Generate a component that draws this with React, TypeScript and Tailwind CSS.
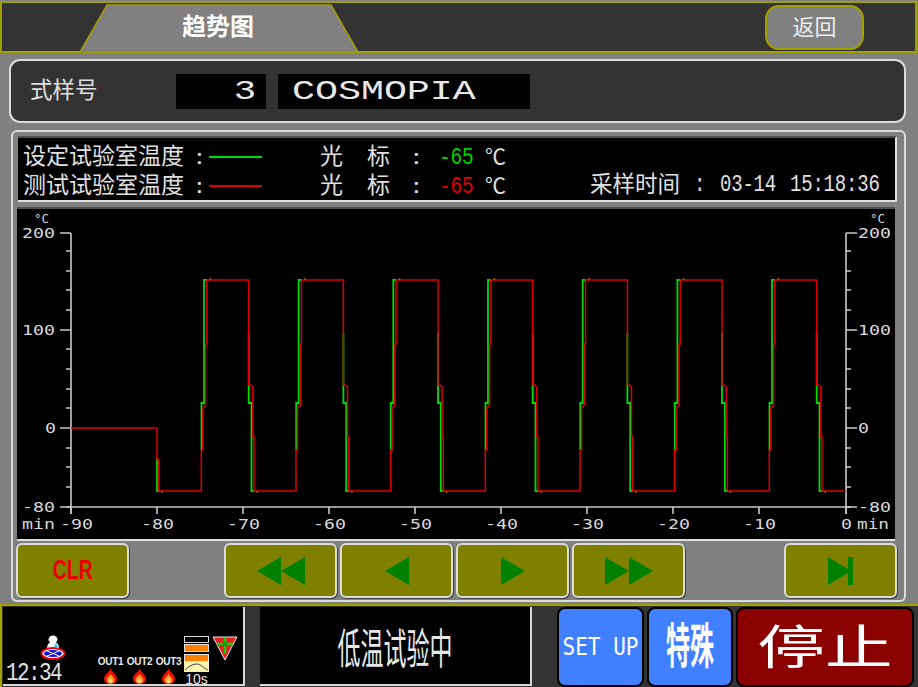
const cycleDx = Array.from({ length: 7 }, (_, k) => k * 94.67);

function pts(list: number[][], dx = 0) {
  return list.map(([x, y]) => `${(x + dx).toFixed(1)},${y}`).join(" ");
}

const greenA = [[201.5, 450], [201.5, 403], [204, 403], [204, 280], [207, 280]];
const greenB = [[248.7, 333], [248.7, 403], [251.5, 403], [251.5, 491], [254.6, 491]];
const redCycle = [
  [201.3, 491], [201.3, 450], [202.8, 450], [202.8, 408], [204, 407], [205.6, 405], [205.6, 344], [206.8, 344], [206.8, 280],
  [248.7, 280], [248.7, 385], [250.5, 385], [252.8, 387], [252.8, 437], [254, 437], [254, 491],
];

function Chart() {
  const minorY = [251, 271, 290, 310, 349, 369, 389, 408, 448, 467, 487];
  const majorY = [233, 330, 428, 507];
  const xTicks = [71, 157, 243, 329, 415, 501, 587, 673, 759, 846];
  const yLabels: [string, number][] = [["200", 233], ["100", 330], ["-80", 507]];
  const xLabels: [string, number][] = [["-90", 76], ["-80", 157], ["-70", 243], ["-60", 329], ["-50", 415], ["-40", 501], ["-30", 587], ["-20", 673], ["-10", 759]];
  const label = "font-['DejaVu_Sans_Mono',monospace]";
  const red: number[][] = [[71, 428], [157, 428], [157, 459], [158.5, 459], [158.5, 491]];
  cycleDx.forEach((dx) => redCycle.forEach(([x, y]) => red.push([x + dx, y])));
  red.push([846, 491]);
  return (
    <svg viewBox="17 209 878 330" className="block w-full h-full" fill="none">
      <g stroke="#c8c8c8" strokeWidth="1.6">
        <path d="M71 233V514M846 233V514M66 507H851" />
        {majorY.map((y) => (
          <path key={y} d={`M60 ${y}H71M846 ${y}H857`} />
        ))}
        {minorY.map((y) => (
          <path key={y} d={`M66 ${y}H71M846 ${y}H851`} />
        ))}
        {xTicks.map((x) => (
          <path key={x} d={`M${x} 507V514`} />
        ))}
      </g>
      <g fill="#d8d8d8" fontSize="14" className={label}>
        {yLabels.map(([t, y]) => (
          <g key={t}>
            <text x="22" y={y + 5} textLength="33" lengthAdjust="spacingAndGlyphs">{t}</text>
            <text x="858" y={y + 5} textLength="33" lengthAdjust="spacingAndGlyphs">{t}</text>
          </g>
        ))}
        <text x="45" y="433" textLength="11" lengthAdjust="spacingAndGlyphs">0</text>
        <text x="858" y="433" textLength="11" lengthAdjust="spacingAndGlyphs">0</text>
        {xLabels.map(([t, x]) => (
          <text key={t} x={x - 16} y="529" textLength="33" lengthAdjust="spacingAndGlyphs">{t}</text>
        ))}
        <text x="841" y="529" textLength="11" lengthAdjust="spacingAndGlyphs">0</text>
        <text x="22" y="529" textLength="33" lengthAdjust="spacingAndGlyphs">min</text>
        <text x="857" y="529" textLength="32" lengthAdjust="spacingAndGlyphs">min</text>
        <text x="34" y="223" fontSize="13" textLength="15" lengthAdjust="spacingAndGlyphs">°C</text>
        <text x="870" y="223" fontSize="13" textLength="15" lengthAdjust="spacingAndGlyphs">°C</text>
      </g>
      <g stroke="#00dc00" strokeWidth="1.8">
        <polyline points={pts([[157, 459], [157, 491], [160, 491]])} />
        {cycleDx.map((dx) => (
          <g key={dx}>
            <polyline points={pts(greenA, dx)} />
            <polyline points={pts(greenB, dx)} />
          </g>
        ))}
      </g>
      <polyline points={pts(red)} stroke="#dc0000" strokeWidth="1.5" />
      <g fill="#a06000">
        {cycleDx.map((dx) => (
          <g key={dx}>
            <rect x={209.5 + dx} y="278" width="1.5" height="2" />
            <rect x={256.5 + dx} y="491" width="1.5" height="2" />
          </g>
        ))}
        <rect x="161" y="491" width="1.5" height="2" />
      </g>
    </svg>
  );
}

function NavButton({ className, children }: { className: string; children: React.ReactNode }) {
  return (
    <div className={`h-[55px] flex items-center justify-center bg-[#808000] border-2 border-[#dcdcdc] rounded-[6px] shadow-[1px_1px_0_#404040] ${className}`}>
      {children}
    </div>
  );
}

function Arrow({ polys, w }: { polys: string[]; w: number }) {
  return (
    <svg width={w} height="28" viewBox={`0 0 ${w} 28`}>
      {polys.map((p) => (
        <polygon key={p} points={p} fill="#008000" />
      ))}
    </svg>
  );
}

function Flame() {
  return (
    <svg width="15" height="16" viewBox="0 0 15 16">
      <path d="M7.5 0C8 4 14 6 14 11C14 14 11 16 7.5 16C4 16 1 14 1 11C1 6 7 4 7.5 0Z" fill="#f01000" />
      <path d="M7.5 5.5C8 8 11.5 9.5 11.5 12C11.5 14 9.5 15.5 7.5 15.5C5.5 15.5 3.5 14 3.5 12C3.5 9.5 7 8 7.5 5.5Z" fill="#ff9a30" />
      <path d="M7.5 10C8 11 9.5 12 9.5 13.2C9.5 14.3 8.6 15 7.5 15C6.4 15 5.5 14.3 5.5 13.2C5.5 12 7 11 7.5 10Z" fill="#ffd870" />
    </svg>
  );
}

function Out({ t }: { t: string }) {
  return (
    <div className="w-[29px] flex flex-col items-center">
      <span className="text-[10px] leading-[11px] font-bold text-[#e8e8e8] font-['Liberation_Sans',sans-serif] tracking-[-0.3px]">{t}</span>
      <div className="mt-[1px]"><Flame /></div>
    </div>
  );
}

const mono = "font-['Liberation_Mono','Noto_Sans_CJK_SC',monospace]";
const sans = "font-['Liberation_Sans','Noto_Sans_CJK_SC',sans-serif]";

function LegendRow({ label, lineColor, value, valueColor, right }: { label: string; lineColor: string; value: string; valueColor: string; right?: React.ReactNode }) {
  return (
    <div className="h-[29px] flex items-center text-[#e0e0e0] text-[23px] leading-none whitespace-nowrap">
      <span className="w-[173px] shrink-0">{label}</span>
      <span className="w-[13px] shrink-0 text-[20px] font-bold">:</span>
      <span className="w-[53px] h-[2px] shrink-0" style={{ background: lineColor }} />
      <span className="w-[58px] shrink-0" />
      <span className="w-[47px] shrink-0">光</span>
      <span className="w-[46px] shrink-0">标</span>
      <span className="w-[26px] shrink-0 text-[20px] font-bold">:</span>
      <span className="w-[46px] shrink-0">
        <span className={`inline-block scale-y-[1.25] text-[19.5px] tracking-[-0.2px] ${mono}`} style={{ color: valueColor }}>{value}</span>
      </span>
      <span className="w-[105px] shrink-0 text-[21px]">℃</span>
      {right}
    </div>
  );
}

export default function App() {
  return (
    <div className={`w-[918px] h-[687px] bg-[#808080] overflow-hidden flex flex-col ${sans}`}>
      {/* header */}
      <header className="mt-[1px] mr-[1px] h-[52px] shrink-0 bg-[#333333] border-2 border-[#a0a000] flex">
        <div className="relative ml-[78px] w-[278px] h-[50px] -mt-[1px] flex items-center justify-center">
          <svg viewBox="0 0 278 50" className="absolute inset-0 w-full h-full" fill="none">
            <polygon points="0,50 27,3 251,3 278,50" fill="#808080" />
            <polyline points="0,50 27,3 251,3 278,50" stroke="#a0a000" strokeWidth="1.5" />
          </svg>
          <span className="relative text-white text-[24px] leading-none font-bold -ml-[2px]">趋势图</span>
        </div>
        <div className="ml-auto mr-[51px] mt-[2px] w-[99px] h-[45px] rounded-[14px] bg-[#808080] border-2 border-[#a0a000] flex items-center justify-center text-[#ececec] text-[22px] leading-none">
          返回
        </div>
      </header>

      {/* sample number */}
      <section className="ml-[9px] mt-[6px] w-[897px] h-[64px] shrink-0 bg-[#333333] border-2 border-[#dcdcdc] rounded-[11px] flex items-center">
        <span className="ml-[19px] w-[146px] mt-[1px] text-[#e0e0e0] text-[22.5px] leading-none">式样号</span>
        <div className="w-[90px] h-[35px] bg-black flex items-center justify-end pr-[10px]">
          <span className={`inline-block mt-[3px] origin-right scale-x-[1.7] scale-y-[1.25] text-[#e8e8e8] text-[22px] leading-none ${mono}`}>3</span>
        </div>
        <div className="ml-[12px] w-[252px] h-[35px] bg-black flex items-center pl-[14px]">
          <span className={`inline-block mt-[3px] origin-left scale-x-[1.74] scale-y-[1.25] text-[#e8e8e8] text-[22px] leading-none whitespace-nowrap ${mono}`}>COSMOPIA</span>
        </div>
      </section>

      {/* main panel */}
      <section className="ml-[11px] mt-[7px] w-[895px] h-[472px] shrink-0 border-2 border-[#dcdcdc] rounded-[6px] flex flex-col">
        <div className="ml-[5px] mt-[4px] w-[879px] h-[66px] shrink-0 bg-black border-t-2 border-t-[#505050] border-b-2 border-b-[#e0e0e0] border-r-2 border-r-[#e0e0e0] pl-[5px] pt-[4px]">
          <LegendRow label="设定试验室温度" lineColor="#00dc00" value="-65" valueColor="#00d000" />
          <LegendRow
            label="测试试验室温度"
            lineColor="#dc0000"
            value="-65"
            valueColor="#e00000"
            right={
              <span className="flex items-center text-[#e0e0e0]">
                <span className="text-[22.5px] w-[104px]">采样时间</span>
                <span className={`inline-block scale-y-[1.3] text-[19px] tracking-[-0.2px] ${mono}`}>
                  <span className="inline-block w-[26px]">:</span>
                  <span>03-14</span>
                  <span className="inline-block w-[14px]" />
                  <span>15:18:36</span>
                </span>
              </span>
            }
          />
        </div>
        <div className="ml-[4px] mt-[5px] w-[878px] h-[334px] shrink-0 bg-black border-t-2 border-t-[#505050] border-b-2 border-b-[#e0e0e0]">
          <Chart />
        </div>
        <div className="ml-[3px] mt-[2px] flex items-center">
          <NavButton className="w-[113px]">
            <span className="inline-block scale-x-[0.72] text-[#e80000] text-[27px] leading-none font-bold font-['Liberation_Sans',sans-serif]">CLR</span>
          </NavButton>
          <NavButton className="ml-[95px] w-[113px]">
            <Arrow w={48} polys={["0,14 24,0 24,28", "24,14 48,0 48,28"]} />
          </NavButton>
          <NavButton className="ml-[3px] w-[113px]">
            <Arrow w={24} polys={["0,14 24,0 24,28"]} />
          </NavButton>
          <NavButton className="ml-[3px] w-[113px]">
            <Arrow w={24} polys={["24,14 0,0 0,28"]} />
          </NavButton>
          <NavButton className="ml-[3px] w-[113px]">
            <Arrow w={48} polys={["24,14 0,0 0,28", "48,14 24,0 24,28"]} />
          </NavButton>
          <NavButton className="ml-[99px] w-[113px]">
            <Arrow w={25} polys={["0,0 20,12 20,0 25,0 25,28 20,28 20,16 0,28"]} />
          </NavButton>
        </div>
      </section>

      {/* footer */}
      <footer className="h-[83px] mt-auto shrink-0 bg-[#333333] border-t-2 border-t-[#a0a000] border-l-2 border-l-[#a0a000] flex pr-[4px]">
        <div className="ml-[1px] mt-[1px] w-[242px] h-[79px] bg-black border-r-2 border-r-[#d8d8d8] border-b-2 border-b-[#d8d8d8] flex items-end">
          <div className="w-[64px] ml-[2px] flex flex-col items-start">
            <svg width="26" height="25" viewBox="0 0 26 25" className="ml-[35px]">
              <ellipse cx="13" cy="4.5" rx="4.5" ry="4" fill="#ffffff" />
              <path d="M7 14C7 9 9 7 13 7C17 7 19 9 19 14Z" fill="#f4f4f4" />
              <path d="M16 8L18 12H14Z" fill="#30c8f0" />
              <ellipse cx="13" cy="18.5" rx="11.5" ry="5.5" fill="#ffffff" stroke="#f00000" strokeWidth="1.8" />
              <ellipse cx="13" cy="18.5" rx="9" ry="3.5" fill="#1010d0" />
              <path d="M6 15.5L20 21.5M6 21.5L20 15.5" stroke="#ffffff" strokeWidth="1" />
            </svg>
            <span className={`inline-block ml-[1px] mt-[6px] mb-[3px] scale-y-[1.2] text-[#e0e0e0] text-[21px] leading-[15px] tracking-[-1.6px] ${mono}`}>12:34</span>
          </div>
          <div className="ml-[27px] flex">
            <Out t="OUT1" />
            <Out t="OUT2" />
            <Out t="OUT3" />
          </div>
          <div className="ml-[1px] w-[25px] flex flex-col items-center self-start mt-[29px]">
            <div className="w-[25px] h-[7px] bg-black border border-[#e0e0e0]" />
            <div className="mt-[1px] w-[25px] h-[8px] bg-[#ff8000] border border-[#e0e0e0]" />
            <div className="mt-[2px] w-[25px] h-[8px] bg-[#ff8000] border border-[#e0e0e0]" />
            <svg width="25" height="10" viewBox="0 0 25 10" className="bg-[#fff4b0]">
              <path d="M1 8C5 4 9 2 13 2C17 2 19 6 24 8" stroke="#404040" fill="none" strokeWidth="1" />
            </svg>
            <span className="text-[#e8e8e8] text-[14px] leading-[12px] mt-[1px] font-['Liberation_Sans',sans-serif]">10s</span>
          </div>
          <svg width="26" height="25" viewBox="0 0 26 25" className="ml-[3px] self-start mt-[29px]">
            <polygon points="1,1 25,1 13,24" fill="#e82020" stroke="#e8e8e8" strokeWidth="1" />
            <path d="M13 2V17M5 8H21" stroke="#10d010" strokeWidth="2.5" />
            <circle cx="13" cy="8" r="2.5" fill="#10a010" />
          </svg>
        </div>
        <div className="ml-[15px] mt-[1px] w-[272px] h-[79px] bg-black border-r-2 border-r-[#d8d8d8] border-b-2 border-b-[#d8d8d8] flex items-center justify-center">
          <span className="inline-block scale-y-[1.85] text-[#e8e8e8] text-[23px] leading-none whitespace-nowrap mt-[9px]">低温试验中</span>
        </div>
        <div className="ml-[25px] mt-[1px] w-[87px] h-[80px] bg-[#4080ff] border-2 border-black rounded-[8px] flex items-center justify-center">
          <span className="inline-block scale-y-[1.2] text-white text-[21px] leading-none whitespace-nowrap font-['DejaVu_Sans_Mono',monospace]">SET UP</span>
        </div>
        <div className="ml-[3px] mt-[1px] w-[86px] h-[80px] bg-[#4080ff] border-2 border-black rounded-[8px] flex items-center justify-center">
          <span className="inline-block scale-y-[2] text-white text-[24px] leading-none font-bold whitespace-nowrap">特殊</span>
        </div>
        <div className="ml-[3px] mt-[1px] w-[178px] h-[80px] bg-[#8b0000] border-2 border-black rounded-[8px] flex items-center justify-center">
          <span className="inline-block scale-x-[1.44] text-white text-[47px] leading-none whitespace-nowrap">停止</span>
        </div>
      </footer>
    </div>
  );
}
